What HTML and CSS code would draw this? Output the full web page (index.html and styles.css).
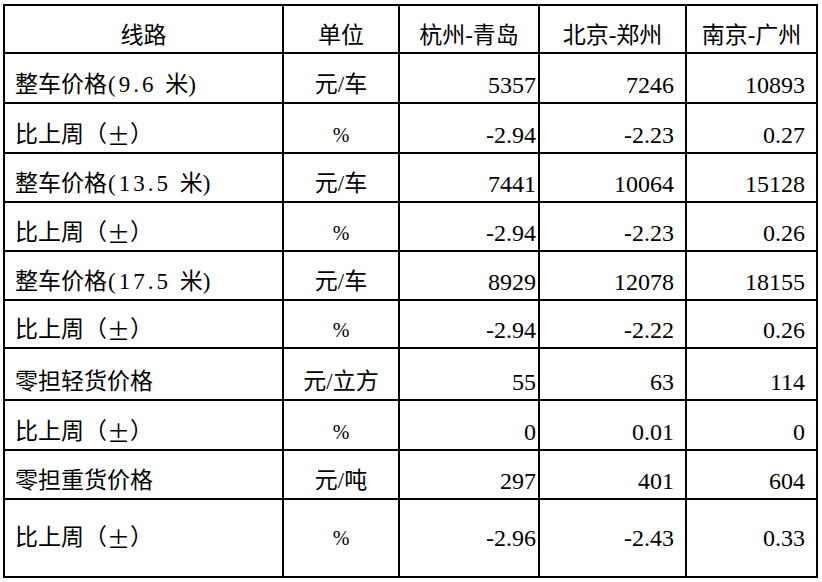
FILE: index.html
```html
<!DOCTYPE html>
<html lang="zh-CN">
<head>
<meta charset="utf-8">
<title>运价表</title>
<link rel="stylesheet" href="styles.css">
</head>
<body>
<div class="sheet" role="table">
  <div class="c hd">线路</div>
  <div class="c hd">单位</div>
  <div class="c hd">杭州-青岛</div>
  <div class="c hd">北京-郑州</div>
  <div class="c hd">南京-广州</div>

  <div class="c lbl">整车价格<span class="lat">(9.6 </span>米)</div>
  <div class="c unit">元/车</div>
  <div class="c n n1">5357</div>
  <div class="c n">7246</div>
  <div class="c n">10893</div>

  <div class="c lbl">比上周（<span class="pm">±</span>）</div>
  <div class="c unit pct">%</div>
  <div class="c n n1">-2.94</div>
  <div class="c n">-2.23</div>
  <div class="c n">0.27</div>

  <div class="c lbl">整车价格<span class="lat">(13.5 </span>米)</div>
  <div class="c unit">元/车</div>
  <div class="c n n1">7441</div>
  <div class="c n">10064</div>
  <div class="c n">15128</div>

  <div class="c lbl">比上周（<span class="pm">±</span>）</div>
  <div class="c unit pct">%</div>
  <div class="c n n1">-2.94</div>
  <div class="c n">-2.23</div>
  <div class="c n">0.26</div>

  <div class="c lbl">整车价格<span class="lat">(17.5 </span>米)</div>
  <div class="c unit">元/车</div>
  <div class="c n n1">8929</div>
  <div class="c n">12078</div>
  <div class="c n">18155</div>

  <div class="c lbl">比上周（<span class="pm">±</span>）</div>
  <div class="c unit pct">%</div>
  <div class="c n n1">-2.94</div>
  <div class="c n">-2.22</div>
  <div class="c n">0.26</div>

  <div class="c lbl">零担轻货价格</div>
  <div class="c unit">元/立方</div>
  <div class="c n n1">55</div>
  <div class="c n">63</div>
  <div class="c n">114</div>

  <div class="c lbl">比上周（<span class="pm">±</span>）</div>
  <div class="c unit pct">%</div>
  <div class="c n n1">0</div>
  <div class="c n">0.01</div>
  <div class="c n">0</div>

  <div class="c lbl">零担重货价格</div>
  <div class="c unit">元/吨</div>
  <div class="c n n1">297</div>
  <div class="c n">401</div>
  <div class="c n">604</div>

  <div class="c lbl last">比上周（<span class="pm">±</span>）</div>
  <div class="c unit pct last">%</div>
  <div class="c n n1 last">-2.96</div>
  <div class="c n last">-2.43</div>
  <div class="c n last">0.33</div>
</div>
</body>
</html>
```

FILE: styles.css
```css
html, body {
  margin: 0;
  padding: 0;
  background: #fff;
}

.sheet {
  margin: 4px 0 0 3px;
  width: 811px;
  padding: 2px;
  background: #000;
  display: grid;
  grid-template-columns: 277px 114px 138px 145px 129px;
  grid-template-rows: 46px 48px 48px 47px 47px 47px 46px 50px 48px 47px 76px;
  gap: 2px;
  font-family: "Liberation Serif", "Noto Sans CJK SC", serif;
  font-size: 23px;
  color: #000;
}

.c {
  background: #fff;
  display: flex;
  align-items: flex-end;
  padding-bottom: 3px;
  line-height: 28px;
  white-space: pre;
  box-sizing: border-box;
}

.hd {
  justify-content: center;
  padding-bottom: 2px;
}

.lbl {
  justify-content: flex-start;
  padding-left: 10px;
}

.lat {
  letter-spacing: 3px;
  padding-left: 1px;
}

.unit {
  justify-content: center;
}

.pct {
  font-size: 20px;
}

.n {
  justify-content: flex-end;
  padding-right: 11px;
  font-size: 24px;
}

.n1 {
  padding-right: 2px;
}

.pm {
  font-family: "Noto Sans CJK SC", sans-serif;
  font-feature-settings: "fwid" 1;
}

.last {
  align-items: center;
  padding-bottom: 0;
}
```
